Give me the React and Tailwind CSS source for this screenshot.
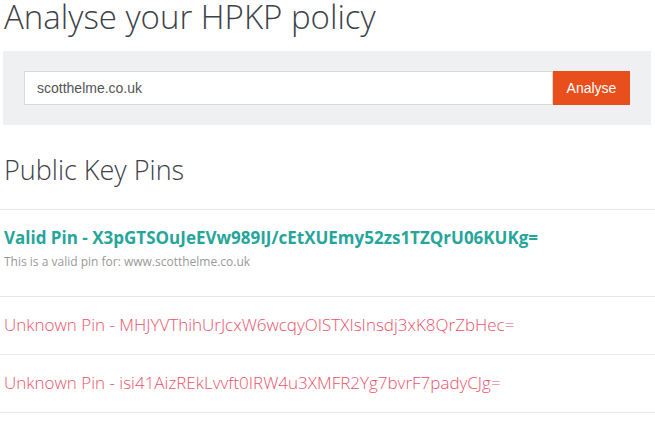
import React, { useState } from "react";

const pins = [
  {
    valid: true,
    hash: "X3pGTSOuJeEVw989IJ/cEtXUEmy52zs1TZQrU06KUKg=",
    note: "This is a valid pin for: www.scotthelme.co.uk",
  },
  { valid: false, hash: "MHJYVThihUrJcxW6wcqyOISTXIsInsdj3xK8QrZbHec=" },
  { valid: false, hash: "isi41AizREkLvvft0IRW4u3XMFR2Yg7bvrF7padyCJg=" },
];

export default function App() {
  const [domain, setDomain] = useState("scotthelme.co.uk");

  return (
    <div className="w-[655px] h-[423px] overflow-hidden bg-white font-['Open_Sans',sans-serif] text-[#444]">
      <h1 className="px-[4px] text-[33px] leading-[33px] font-light text-[#3d4249]">
        Analyse your HPKP policy
      </h1>

      {/* search form */}
      <div className="ml-[3px] mr-[4px] mt-[18px] bg-[#eef0f2] px-[21px] py-[20px]">
        <div className="flex h-[34px]">
          <input
            type="text"
            className="flex-1 h-full border border-[#d9d9d9] bg-white px-[12px] font-['Liberation_Sans',Arial,sans-serif] text-[14px] text-[#555] outline-none"
            value={domain}
            onChange={(e) => setDomain(e.target.value)}
          />
          <button className="w-[77px] h-full bg-[#e94e1d] text-white font-['Liberation_Sans',Arial,sans-serif] text-[14px]">
            Analyse
          </button>
        </div>
      </div>

      <h2 className="px-[4px] mt-[27px] text-[27px] leading-[36px] font-light text-[#3d4249]">
        Public Key Pins
      </h2>

      <div className="mt-[21px] border-t border-[#e8e8e8]">
        {pins.map((p) => (
          <div
            key={p.hash}
            className={`border-b border-[#e8e8e8] px-[4px] ${
              p.valid ? "pt-[16px] pb-[26px]" : "pt-[16px] pb-[17px]"
            }`}
          >
            {p.valid ? (
              <>
                <div className="text-[17px] leading-[24px] font-bold text-[#26a69a]">
                  Valid Pin - {p.hash}
                </div>
                <div className="mt-[3px] text-[12px] leading-[17px] text-[#999]">
                  {p.note}
                </div>
              </>
            ) : (
              <div className="text-[17px] leading-[24px] font-light text-[#e9536a]">
                Unknown Pin - {p.hash}
              </div>
            )}
          </div>
        ))}
      </div>
    </div>
  );
}
